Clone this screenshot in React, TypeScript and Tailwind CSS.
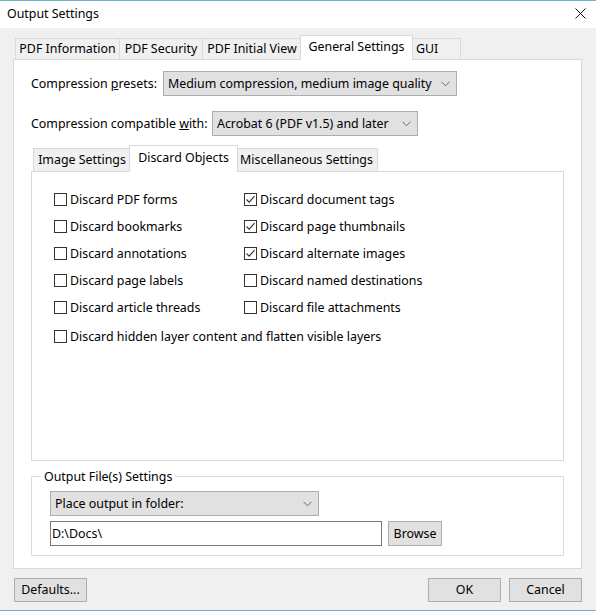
import React from "react";

const Chevron = () => (
  <svg width="9" height="6" viewBox="0 0 9 6" className="shrink-0">
    <path d="M0.5 0.8 L4.5 4.8 L8.5 0.8" fill="none" stroke="#6b6b6b" strokeWidth="1" />
  </svg>
);

const Select = ({ text, w }: { text: string; w: string }) => (
  <div className={`${w} h-[25px] bg-[#e1e1e1] border border-[#adadad] flex items-center justify-between pl-[4px] pr-[6px]`}>
    <span className="whitespace-nowrap">{text}</span>
    <Chevron />
  </div>
);

const Check = ({ label, checked }: { label: string; checked?: boolean }) => (
  <div className="h-[27px] flex items-center">
    <div className="w-[13px] h-[13px] border border-[#333] bg-white shrink-0 flex items-center justify-center">
      {checked && (
        <svg width="11" height="11" viewBox="0 0 11 11">
          <path d="M1.5 5.5 L4.2 8.2 L9.5 2.2" fill="none" stroke="#333" strokeWidth="1.1" />
        </svg>
      )}
    </div>
    <span className="ml-[3px] whitespace-nowrap">{label}</span>
  </div>
);

const Button = ({ label, w }: { label: string; w: string }) => (
  <div className={`${w} h-[24px] bg-[#e1e1e1] border border-[#adadad] flex items-center justify-center`}>
    {label}
  </div>
);

export default function App() {
  return (
    <div className="w-[603px] h-[614px] bg-white text-[12.4px] leading-[16px] text-black font-['Noto_Sans',sans-serif]">
      <div className="w-[596px] border-t border-b border-[#6cb5c3] bg-[#f0f0f0] flex flex-col">
        {/* title bar */}
        <div className="h-[27px] bg-white flex items-center justify-between pl-[7px] pr-[10px]">
          <span className="-mt-[2px]">Output Settings</span>
          <svg width="11" height="11" viewBox="0 0 11 11" className="-mt-[2px]">
            <path d="M0.5 0.5 L10.5 10.5 M10.5 0.5 L0.5 10.5" stroke="#111" strokeWidth="1" />
          </svg>
        </div>

        {/* body */}
        <div className="pt-[7px] flex flex-col">
          {/* outer tabs */}
          <div className="flex items-end pl-[15px]">
            <div className="w-[105px] h-[21px] bg-[#f0f0f0] border-l border-t border-r border-[#d9d9d9] flex items-center justify-center">PDF Information</div>
            <div className="w-[83px] h-[21px] bg-[#f0f0f0] border-t border-r border-[#d9d9d9] flex items-center justify-center">PDF Security</div>
            <div className="w-[99px] h-[21px] bg-[#f0f0f0] border-t border-r border-[#d9d9d9] flex items-center justify-center">PDF Initial View</div>
            <div className="w-[113px] h-[25px] -ml-[2px] -mr-[2px] -mb-px relative z-10 bg-white border-l border-t border-r border-[#d9d9d9] flex items-center justify-center pb-[2px]">General Settings</div>
            <div className="w-[50px] h-[21px] bg-[#f0f0f0] border-t border-r border-[#d9d9d9] flex items-center justify-start pl-[5px]">GUI</div>
          </div>

          {/* outer panel */}
          <div className="ml-[13px] w-[569px] bg-white border border-[#d9d9d9] pt-[11px] pl-[17px] pr-[17px] pb-[12px] flex flex-col">
            <div className="flex items-center">
              <span className="w-[132px] whitespace-nowrap">
                Compression <span className="underline">p</span>resets:
              </span>
              <Select w="w-[294px]" text="Medium compression, medium image quality" />
            </div>
            <div className="flex items-center mt-[15px]">
              <span className="w-[181px] whitespace-nowrap">
                Compression compatible <span className="underline">w</span>ith:
              </span>
              <Select w="w-[206px]" text="Acrobat 6 (PDF v1.5) and later" />
            </div>

            {/* inner tabs */}
            <div className="flex items-end pl-[2px] mt-[9px]">
              <div className="w-[98px] h-[23px] bg-[#f0f0f0] border-l border-t border-r border-[#d9d9d9] flex items-center justify-center">Image Settings</div>
              <div className="w-[109px] h-[27px] -ml-[2px] -mr-[2px] -mb-px relative z-10 bg-white border-l border-t border-r border-[#d9d9d9] flex items-center justify-center pb-[3px]">Discard Objects</div>
              <div className="w-[142px] h-[23px] bg-[#f0f0f0] border-t border-r border-[#d9d9d9] flex items-center justify-center">Miscellaneous Settings</div>
            </div>

            {/* inner panel */}
            <div className="w-[533px] h-[290px] bg-white border border-[#d9d9d9] pt-[14px] pl-[22px]">
              <div className="grid grid-cols-[190px_1fr]">
                <Check label="Discard PDF forms" />
                <Check label="Discard document tags" checked />
                <Check label="Discard bookmarks" />
                <Check label="Discard page thumbnails" checked />
                <Check label="Discard annotations" />
                <Check label="Discard alternate images" checked />
                <Check label="Discard page labels" />
                <Check label="Discard named destinations" />
                <Check label="Discard article threads" />
                <Check label="Discard file attachments" />
              </div>
              <div className="mt-[2px]">
                <Check label="Discard hidden layer content and flatten visible layers" />
              </div>
            </div>

            {/* output group */}
            <fieldset className="mt-[7px] w-[533px] border border-[#dcdcdc] pl-[18px] pt-[6px] pb-[9px]">
              <legend className="-ml-[9px] px-[3px] leading-[17px]">Output File(s) Settings</legend>
              <Select w="w-[269px]" text="Place output in folder:" />
              <div className="flex mt-[5px]">
                <div className="w-[332px] h-[25px] bg-white border border-[#7a7a7a] flex items-center pl-[1px]">D:\Docs\</div>
                <div className="ml-[6px]">
                  <div className="w-[54px] h-[25px] bg-[#e1e1e1] border border-[#adadad] flex items-center justify-center">Browse</div>
                </div>
              </div>
            </fieldset>
          </div>

          {/* bottom buttons */}
          <div className="flex items-center justify-between pl-[14px] pr-[14px] mt-[9px] pb-[8px]">
            <Button label="Defaults..." w="w-[73px]" />
            <div className="flex gap-[8px]">
              <Button label="OK" w="w-[73px]" />
              <Button label="Cancel" w="w-[73px]" />
            </div>
          </div>
        </div>
      </div>
    </div>
  );
}
